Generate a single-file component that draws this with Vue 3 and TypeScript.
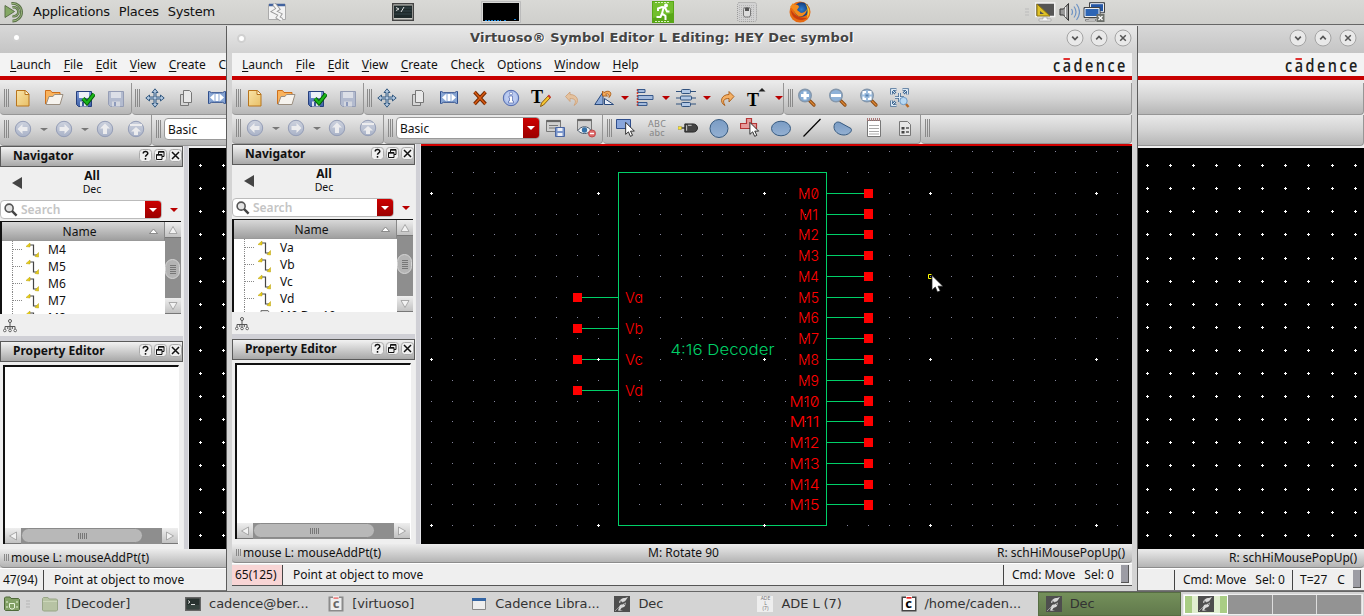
<script setup lang="ts">
interface Tool { icon: string; drop?: boolean; red?: boolean; glyph?: string }
interface Dot { x: number; y: number; major: boolean }
interface EditorWindow {
  id: string
  title: string
  rows: { name: string; cls: string }[]
  clipped: string
  coord: string
  middle: string
  temp: boolean
}

const menus: [string, string, string][] = [
  ['', 'L', 'aunch'], ['', 'F', 'ile'], ['', 'E', 'dit'], ['', 'V', 'iew'], ['', 'C', 'reate'],
  ['Chec', 'k', ''], ['O', 'p', 'tions'], ['', 'W', 'indow'], ['', 'H', 'elp'],
]

const fileTools: Tool[] = [{ icon: 'new' }, { icon: 'open' }, { icon: 'savecheck' }, { icon: 'save' }]
const editTools: Tool[] = [
  { icon: 'move' }, { icon: 'copy' }, { icon: 'stretch' }, { icon: 'delete' }, { icon: 'info' }, { icon: 'tedit', glyph: 'T' },
  { icon: 'undo' }, { icon: 'flip', drop: true, red: true }, { icon: 'align', drop: true, red: true },
  { icon: 'distribute', drop: true, red: true }, { icon: 'redo' }, { icon: 'tup', glyph: 'T', drop: true, red: true },
]
const zoomTools: Tool[] = [{ icon: 'zoomin' }, { icon: 'zoomout' }, { icon: 'zoomfit' }, { icon: 'zoomsel' }]
const navTools: Tool[] = [{ icon: 'back', drop: true }, { icon: 'forward', drop: true }, { icon: 'up' }, { icon: 'top' }]
const shapeTools: Tool[] = [
  { icon: 'rectsel' }, { icon: 'abc', glyph: 'ABC abc' }, { icon: 'pin' }, { icon: 'circle' }, { icon: 'redsel' },
  { icon: 'ellipse' }, { icon: 'line' }, { icon: 'blob' }, { icon: 'notepad' }, { icon: 'doc' },
]

const windows: EditorWindow[] = [
  {
    id: 'back', title: '', rows: ['M4', 'M5', 'M6', 'M7'].map(name => ({ name, cls: 'pin' })),
    clipped: 'M8', coord: '47(94)', middle: '', temp: true,
  },
  {
    id: 'front', title: 'Virtuoso® Symbol Editor L Editing: HEY Dec symbol',
    rows: ['Va', 'Vb', 'Vc', 'Vd'].map(name => ({ name, cls: 'pin' })),
    clipped: 'M0 Dec10', coord: '65(125)', middle: 'M: Rotate 90', temp: false,
  },
]

// Schematic grid, relative to the canvas origin (189, 148)
const backDots: Dot[] = []
for (let i = 0; i < 51; i++) {
  for (let j = 0; j < 17; j++) {
    backDots.push({ x: Math.floor(200.15 + 23.1 * i) - 189, y: Math.floor(165.65 + 23.1 * j) - 148, major: true })
  }
}
// Symbol grid, relative to the canvas origin (421, 146)
const gridX = (k: number) => Math.round(597.65 + 20.775 * k) - 421
const gridY = (k: number) => Math.round(192.85 + 20.77 * k) - 146
const frontDots: Dot[] = []
for (let i = -8; i <= 25; i++) {
  for (let j = -2; j <= 16; j++) {
    frontDots.push({ x: gridX(i), y: gridY(j), major: i % 8 === 0 && j % 8 === 0 })
  }
}
const tall = [1, 6, 10, 11, 15]
const outputs = Array.from({ length: 16 }, (_, i) => ({
  name: 'M' + i, y: gridY(i), top: gridY(i) - (tall.includes(i) && i !== 6 && i !== 15 ? 5 : 4), h: tall.includes(i) ? 10 : 9,
  x: i > 9 ? 368.5 : i === 1 ? 378 : 377, w: i > 9 ? 30 : i === 1 ? 19 : 21,
}))
const inputs = ['Va', 'Vb', 'Vc', 'Vd'].map((name, i) => ({ name, y: 151 + 31 * i }))

const tasks = [
  { icon: 'folder', label: '[Decoder]' }, { icon: 'terminal', label: 'cadence@ber...' },
  { icon: 'cgrey', label: '[virtuoso]', glyph: 'c' }, { icon: 'window', label: 'Cadence Libra...' },
  { icon: 'quill', label: 'Dec' }, { icon: 'ade', label: 'ADE L (7)', glyph: 'ADE\nL\n(7)' },
  { icon: 'cdark', label: '/home/caden...', glyph: 'c' }, { icon: 'quill', label: 'Dec', active: true },
]
</script>

<template>
  <div class="desktop">
    <svg class="sprite" width="0" height="0">
      <defs>
        <linearGradient id="gBlue" x1="0" y1="0" x2="0" y2="1"><stop offset="0" stop-color="#7a9cc4" /><stop offset="1" stop-color="#94b0d2" /></linearGradient>
        <linearGradient id="gSave" x1="0" y1="0" x2="0" y2="1"><stop offset="0" stop-color="#7f9bd8" /><stop offset="1" stop-color="#3f62a8" /></linearGradient>
        <linearGradient id="gPage" x1="0" y1="0" x2="1" y2="1"><stop offset="0" stop-color="#f9e3a6" /><stop offset="1" stop-color="#e8c068" /></linearGradient>
        <linearGradient id="gNav" x1="0" y1="0" x2="0" y2="1"><stop offset="0" stop-color="#cdd2de" /><stop offset="1" stop-color="#aab3c8" /></linearGradient>
        <radialGradient id="gFox"><stop offset="0" stop-color="#2f7fd0" /><stop offset="1" stop-color="#123a7c" /></radialGradient>
      </defs>
      <symbol id="i-new" viewBox="0 0 20 20"><path d="M3.500 2.500h9l3.500 3.500v12H3.500z" fill="url(#gPage)" stroke="#b8741c" /><path d="M12 3v3.500h4" fill="#fff3cf" stroke="#b8741c" /></symbol>
      <symbol id="i-open" viewBox="0 0 20 20"><path d="M1.500 16V2.500h5l1.500 2h8V9" fill="#f9b35d" stroke="#cf6f19" /><path d="M2 16.500L5 8.500h4l1.500-2h8.500l-3 10z" fill="#f6f3ee" stroke="#9a8e80" /></symbol>
      <symbol id="i-savecheck" viewBox="0 0 20 20"><path d="M1.500 3.500h15v15h-13l-2-2z" fill="url(#gSave)" stroke="#263f7c" /><path d="M4 4h10v6H4z" fill="#eef1f8" /><path d="M5 13.500h8v5H5z" fill="#dfe3ec" /><path d="M7 14h2v4H7z" fill="#405a98" /><path d="M8 10.500l4 4.500 7-9" fill="none" stroke="#075b07" stroke-width="4.200" /><path d="M8 10.500l4 4.500 7-9" fill="none" stroke="#19b519" stroke-width="2.300" /></symbol>
      <symbol id="i-save" viewBox="0 0 20 20"><path d="M2.500 3.500h15v15h-13l-2-2z" fill="#b3bbcf" stroke="#959db5" /><path d="M5 4h10v6H5z" fill="#dcdfe7" /><path d="M6 13.500h8v5H6z" fill="#d4d7df" /><path d="M8 14h2v4H8z" fill="#8d9abc" /></symbol>
      <symbol id="i-move" viewBox="0 0 20 20"><path d="M10 .8l3 3.700h-2v4.500h4.500V7l3.700 3-3.700 3v-2H11v4.500h2l-3 3.700-3-3.700h2V11H4.500v2L.8 10l3.700-3v2H9V4.500H7z" fill="#b4c9e0" stroke="#345a80" stroke-width="1" /></symbol>
      <symbol id="i-copy" viewBox="0 0 20 20"><path d="M4.500 6.500h8v11h-8z" fill="#d5d5d5" stroke="#777" /><path d="M7.500 2.500h6l2 2v10h-8z" fill="#e8e8e8" stroke="#777" /></symbol>
      <symbol id="i-stretch" viewBox="0 0 20 20"><path d="M1.500 3.500h1l2 1.200h11l2-1.200h1v12h-1l-2-1.200h-11l-2 1.200h-1z" fill="#88a6d4" stroke="#2f4e8c" /><path d="M3 9.500l4.500-4v8zM17 9.500l-4.500-4v8zM8.500 6h3v7h-3z" fill="#fff" /></symbol>
      <symbol id="i-delete" viewBox="0 0 20 20"><path d="M4.500 4l11 12M15.500 4l-11 12" stroke="#742900" stroke-width="3.600" /><path d="M4.500 4l11 12M15.500 4l-11 12" stroke="#d95a12" stroke-width="1.500" /></symbol>
      <symbol id="i-info" viewBox="0 0 20 20"><circle cx="10" cy="10" r="7.700" fill="#a9bde8" stroke="#5169ae" /><circle cx="10" cy="9.500" r="6" fill="#bccbf0" /><path d="M8 8h3.500v5h1v2H7.500v-2h1V10H8z" fill="#fff" stroke="#5169ae" stroke-width=".7" /><circle cx="10" cy="5.500" r="1.500" fill="#fff" stroke="#5169ae" stroke-width=".7" /></symbol>
      <symbol id="i-tedit" viewBox="0 0 20 20"><path d="M8.500 18.500l1-3.500 7-7.500 2 2-7 7.500z" fill="#f5c531" stroke="#8b5c0c" /><path d="M15.500 8l2.500 2.500 1-1.500-2-2.500z" fill="#cb3431" /></symbol>
      <symbol id="i-undo" viewBox="0 0 20 20"><path d="M7 6.500c8 0 10 8 4 11 3-5 1-7-4-7v3L2.500 8.500 7 4z" fill="#e4c29f" stroke="#cfa37a" stroke-width=".9" /></symbol>
      <symbol id="i-redo" viewBox="0 0 20 20"><path d="M12 6.500c-8 0-10 8-4 11-3-5-1-7 4-7v3.500l5-5.500-5-5z" fill="#f4b065" stroke="#a95b15" stroke-width=".9" /></symbol>
      <symbol id="i-flip" viewBox="0 0 20 20"><path d="M.8 16.500L9 4v12.500z" fill="#8eabd8" stroke="#28497d" /><path d="M10.500 16.500h9l-9-6z" fill="#e9eef7" stroke="#28497d" /><path d="M8.500 3v5h5l-1.800-1.700c2-1.300 4 .2 3.300 3.200 4-4 1-8.500-5-5z" fill="#f5ab5c" stroke="#a95b15" stroke-width=".9" /></symbol>
      <symbol id="i-align" viewBox="0 0 20 20"><path d="M2.500 1v18" stroke="#e3361d" stroke-width="1.500" stroke-dasharray="2 1" /><path d="M3 1.500h7v3H3zM3 7.500h15v4H3zM3 14.500h9v3H3z" fill="#a5bbdc" stroke="#37588b" /></symbol>
      <symbol id="i-distribute" viewBox="0 0 20 20"><path d="M0 3.500h20M0 10h20M0 16h20" stroke="#31527e" /><rect x="5.500" y="1.500" width="9" height="4" rx="1" fill="#b2c8e5" stroke="#31527e" /><rect x="4.500" y="8" width="11" height="4" rx="1" fill="#b2c8e5" stroke="#31527e" /><rect x="5.500" y="14.500" width="9" height="4" rx="1" fill="#b2c8e5" stroke="#31527e" /></symbol>
      <symbol id="i-tup" viewBox="0 0 20 20"><path d="M14 0l3.500 3.500h-7z" fill="#222" /></symbol>
      <symbol id="i-abc" viewBox="0 0 20 20" />
      <symbol id="i-zoomin" viewBox="0 0 20 20"><path d="M12.500 12.500l4.500 4.500" stroke="#8b4810" stroke-width="3.200" stroke-linecap="round" /><path d="M13 13l4.500 4.500" stroke="#dd8936" stroke-width="1.300" /><circle cx="8" cy="7.500" r="6.300" fill="#86acd4" stroke="#8497ac" stroke-width="1.400" /><path d="M8 3.500v8M4 7.500h8" stroke="#fff" stroke-width="3" /></symbol>
      <symbol id="i-zoomout" viewBox="0 0 20 20"><path d="M12.500 12.500l4.500 4.500" stroke="#8b4810" stroke-width="3.200" stroke-linecap="round" /><path d="M13 13l4.500 4.500" stroke="#dd8936" stroke-width="1.300" /><circle cx="8" cy="7.500" r="6.300" fill="#8fb2d8" stroke="#8497ac" stroke-width="1.400" /><path d="M3 7.500h10" stroke="#fff" stroke-width="3" /></symbol>
      <symbol id="i-zoomfit" viewBox="0 0 20 20"><path d="M12.500 12.500l4.500 4.500" stroke="#8b4810" stroke-width="3.200" stroke-linecap="round" /><path d="M13 13l4.500 4.500" stroke="#dd8936" stroke-width="1.300" /><circle cx="8" cy="7.500" r="6.300" fill="#9bbcde" stroke="#8497ac" stroke-width="1.400" /><path d="M4.500 6.500V4H7M9 4h2.500v2.500M11.500 8.500V11H9M7 11H4.500V8.500" fill="none" stroke="#fff" stroke-width="2" /><path d="M6.500 7.500h3" stroke="#5682b3" stroke-width="2" /></symbol>
      <symbol id="i-zoomsel" viewBox="0 0 20 20"><path d="M1.500 6.500v-5h5M12.500 1.500h5v5M1.500 12.500v5h5M1.500 1.500l4 4M17.500 1.500l-4 4M1.500 17.500l4-4M9.500 5v9M5 9.500h9" fill="none" stroke="#456d97" stroke-width="2.600" /><path d="M1.500 6.500v-5h5M12.500 1.500h5v5M1.500 12.500v5h5M1.500 1.500l4 4M17.500 1.500l-4 4M1.500 17.500l4-4M9.500 5v9M5 9.500h9" fill="none" stroke="#dbe8f4" stroke-width="1" /><path d="M15.500 15.500l3 3.500" stroke="#b86822" stroke-width="2.300" /><circle cx="13.500" cy="13" r="3.700" fill="#b8d8f2" stroke="#6f9bc7" /></symbol>
      <symbol id="i-disc" viewBox="0 0 20 20"><circle cx="10" cy="10" r="7.700" fill="url(#gNav)" stroke="#949db6" /></symbol>
      <symbol id="i-back" viewBox="0 0 20 20"><use href="#i-disc" /><path d="M4.500 10l5-5v3h5v4h-5v3z" fill="#ececee" /></symbol>
      <symbol id="i-forward" viewBox="0 0 20 20"><use href="#i-disc" /><path d="M15.500 10l-5-5v3h-5v4h5v3z" fill="#ececee" /></symbol>
      <symbol id="i-up" viewBox="0 0 20 20"><use href="#i-disc" /><path d="M10 4.500l5 5h-3v5.500H8V9.500H5z" fill="#ececee" /></symbol>
      <symbol id="i-top" viewBox="0 0 20 20"><use href="#i-disc" /><path d="M4 5h12v2H4zM10 8l5 4.500h-3V16H8v-3.500H5z" fill="#ececee" /></symbol>
      <symbol id="i-cursor" viewBox="0 0 12 18"><path d="M1 1v13l3-2.700 2.200 4.900 2.300-1.100-2.200-4.600h4.200z" fill="#fff" stroke="#222" /></symbol>
      <symbol id="i-rectsel" viewBox="0 0 20 20"><path d="M.5 1.500h14v9H.5z" fill="#89a6dc" stroke="#2f4e8c" /><use href="#i-cursor" x="8.500" y="3.500" width="11.500" height="16.500" /></symbol>
      <symbol id="i-pin" viewBox="0 0 22 20"><path d="M1 10h9" stroke="#222" stroke-width="1.300" /><path d="M0 8.500h4v3H0z" fill="#ffe83b" stroke="#857a2a" stroke-width=".5" /><path d="M7.500 5.500h9c3 0 5 2 5 4.500s-2 4.500-5 4.500h-9z" fill="#444" stroke="#222" /><path d="M9.500 7v6M11 7h4" stroke="#ddd" stroke-width="1" /></symbol>
      <symbol id="i-circle" viewBox="0 0 20 20"><circle cx="10" cy="10.500" r="9" fill="url(#gBlue)" stroke="#365a80" /></symbol>
      <symbol id="i-redsel" viewBox="0 0 20 20"><path d="M6.500 .5h5v5h5v5h-16v-5h6z" fill="#e79b9b" stroke="#b43535" stroke-width="1.200" /><use href="#i-cursor" x="9" y="3.500" width="11" height="16.500" /></symbol>
      <symbol id="i-ellipse" viewBox="0 0 20 20"><ellipse cx="10" cy="10.500" rx="9.500" ry="7.300" fill="url(#gBlue)" stroke="#365a80" /></symbol>
      <symbol id="i-line" viewBox="0 0 20 20"><path d="M1.500 18.500L18.500 1" stroke="#000" stroke-width="1.200" /></symbol>
      <symbol id="i-blob" viewBox="0 0 20 20"><path d="M1 9c0-5 4-6 7-4l10 5.500c2 3-3 6.500-7 6.500-6 0-10-4-10-8z" fill="url(#gBlue)" stroke="#365a80" /></symbol>
      <symbol id="i-notepad" viewBox="0 0 20 20"><path d="M3.500 2.500h13v16h-13z" fill="#fff" stroke="#777" /><path d="M3 1.500h14" stroke="#a77" stroke-width="3" stroke-dasharray="1 1" /><path d="M5 7.500h10M5 10.500h10M5 13.500h10M5 16h10" stroke="#aaa" /></symbol>
      <symbol id="i-doc" viewBox="0 0 20 20"><path d="M4.500 3.500h8l3 3v11h-11z" fill="#e7e7e7" stroke="#777" /><path d="M6.500 9h3v2.500h-3zM6.500 13h3v2.500h-3z" fill="#444" /><path d="M11 10h3M11 14h3" stroke="#555" stroke-width="1.500" /></symbol>
      <symbol id="i-wsave" viewBox="0 0 20 20"><path d="M1.500 2.500h14v11h-14z" fill="#d0d0d0" stroke="#777" /><path d="M1.500 3h14" stroke="#666" stroke-width="2.200" /><path d="M4 7.500h9M4 10h6" stroke="#777" /><path d="M10.500 9.500h9v9h-9z" fill="#7c97cc" stroke="#4a66a3" /><path d="M12.500 10h5v3h-5zM12.500 15h5v3h-5z" fill="#eceff6" /></symbol>
      <symbol id="i-wview" viewBox="0 0 20 20"><path d="M1.500 1.500h14v11h-14z" fill="#d0d0d0" stroke="#777" /><path d="M1.500 2h14" stroke="#666" stroke-width="2.200" /><path d="M2 12.500c3-5 10-5 13 0-3 4-10 4-13 0z" fill="#f6f6f6" stroke="#45566b" /><circle cx="8.500" cy="12" r="2.700" fill="#3571a8" /><circle cx="16" cy="15.500" r="3.500" fill="#dd6a6c" stroke="#c24848" /><path d="M14 15.500h4" stroke="#fff" stroke-width="1.400" /></symbol>
      <symbol id="i-folder" viewBox="0 0 16 16"><path d="M.5 14V2.500l1-1H6l1 1.500h7.500l1 1V14l-1 1h-13z" fill="#b7c3a3" stroke="#98a586" /><path d="M1 5.500h14" stroke="#cbd6b8" /></symbol>
      <symbol id="i-home" viewBox="0 0 16 16"><path d="M.5 13.500V2l1-1H6l1 1.500h7.500l1 1v10l-1 1h-13z" fill="#82a065" stroke="#4f693a" /><path d="M5.500 7.500h5v4.500L9 13H7l-1.500-1.500zM3 5v2M13 5v2M3 10v2M13 10v2" fill="none" stroke="#e8f4dc" /></symbol>
      <symbol id="i-terminal" viewBox="0 0 16 16"><path d="M.7 1.700h14.600v12.600H.7z" fill="#28322f" stroke="#666" stroke-width="1.400" /><path d="M3 4.500l2 1.500-2 1.500M6 8.500h4" stroke="#ddd" fill="none" /><path d="M2 10h12M2 12h12" stroke="#45544e" /></symbol>
      <symbol id="i-cgrey" viewBox="0 0 16 16"><path d="M.5 .5h15v15H.5z" fill="#8b8b8b" /><path d="M2.500 2h11v12h-11z" fill="#eee" /><path d="M5 0h6v3H5z" fill="#eee" /><path d="M5.500 1.500h5v1.200h-5z" fill="#e55" /></symbol>
      <symbol id="i-cdark" viewBox="0 0 16 16"><path d="M.5 .5h15v15H.5z" fill="#444" /><path d="M2 2h12v12H2z" fill="#fff" /><path d="M5 0h6v3H5z" fill="#fff" /><path d="M5.500 1h5v1.700h-5z" fill="#e22" /></symbol>
      <symbol id="i-window" viewBox="0 0 16 16"><path d="M1.500 2.500h13v11h-13z" fill="#eee" stroke="#888" /><path d="M1 3.500h14" stroke="#3465a4" stroke-width="3" /></symbol>
      <symbol id="i-quill" viewBox="0 0 16 16"><path d="M0 0h16v16H0z" fill="#4e4e4e" /><path d="M1 15l6-6" stroke="#999" /><path d="M5 7c0-3 3-5 6-5l3-1-2 3c-2 3-4 1-7 3zM6 9c2-1 4 0 6-3l-1 4c-1 2-4 1-4 3l-1 1 3 1-5-.5z" fill="#d9d9d9" /><path d="M6 5c2 0 3 2 5 4" stroke="#777" fill="none" /></symbol>
      <symbol id="i-ade" viewBox="0 0 16 16"><path d="M0 0h16v16H0z" fill="#eee" /></symbol>
      <symbol id="i-net" viewBox="0 0 16 16"><path d="M4 3h4.500v10h4" fill="none" stroke="#444" stroke-width="1.200" /><path d="M1 4.500L5 1v4zM10 14.500l3.500-4v4.500z" fill="#e9cf16" stroke="#b79d0b" stroke-width=".5" /></symbol>
      <symbol id="i-search" viewBox="0 0 15 15"><circle cx="5.500" cy="5.500" r="4.300" fill="#e4e4e4" stroke="#555" stroke-width="1.700" /><path d="M8.500 8.500l5 5" stroke="#444" stroke-width="2.600" /></symbol>
      <symbol id="i-tree" viewBox="0 0 14 14"><path d="M7 3v7M2 10V7.500h10V10M4.800 10V7.500M9.300 10V7.500" fill="none" stroke="#555" /><circle cx="7" cy="2" r="1.500" fill="#fff" stroke="#555" /><g fill="#fff" stroke="#555" stroke-width=".9"><circle cx="1.800" cy="11.500" r="1.300" /><circle cx="7" cy="11.500" r="1.300" /><circle cx="12.200" cy="11.500" r="1.300" /></g></symbol>
    </svg>

    <header class="panel">
      <svg class="mate" viewBox="0 0 22 22"><path d="M7 2.500a8.800 8.800 0 1 1 1 17.500" fill="none" stroke="#5b7148" stroke-width="2.800" /><path d="M7 2.500a8.800 8.800 0 1 1 1 17.500" fill="none" stroke="#9ab77e" stroke-width="1" /><path d="M8 6.500a4.500 4.500 0 1 1 0 8.500" fill="none" stroke="#5b7148" stroke-width="2.600" /><path d="M8 6.500a4.500 4.500 0 1 1 0 8.500" fill="none" stroke="#9ab77e" stroke-width=".9" /><path d="M.5 4.500L10 10.500.5 16.500z" fill="#84a864" stroke="#5b7148" /></svg>
      <nav class="panel-menu"><span>Applications</span><span>Places</span><span>System</span></nav>
      <svg class="launch xterm" viewBox="0 0 18 18"><path d="M.5 1.500h17v15H.5z" fill="#f3f3f3" stroke="#aaa" /><path d="M1 2h16" stroke="#42639e" stroke-width="2.500" /><path d="M6 1l4 5-4 2.500 6 3-2 3 4 2.500" stroke="#999" stroke-width="4" fill="none" /><path d="M6 1l4 5-4 2.500 6 3-2 3 4 2.500" stroke="#f5f5f5" stroke-width="2.200" fill="none" /></svg>
      <svg class="launch term" viewBox="0 0 22 18"><rect x=".7" y=".7" width="20.600" height="16.600" fill="#c9c9c4" stroke="#444" stroke-width="1.400" /><path d="M2 2.500h18v12.500H2z" fill="#1f2a2b" /><path d="M2.500 5h17M2.500 8h17M2.500 11h17" stroke="#35454a" /><path d="M4 4.500l3 1.500-3 1.500M9 9l3-5" stroke="#ddd" fill="none" /></svg>
      <svg class="launch blackbox" viewBox="0 0 40 22"><path d="M.5 .5h39v21H.5z" fill="#d8d8d6" stroke="#bbb" /><path d="M2 2h36v18H2z" fill="#000" /><path d="M4 19.500h16M23 19.500h3M33 18.500h3" stroke="#1687e0" stroke-dasharray="2 1" /></svg>
      <svg class="launch exit" viewBox="0 0 22 22"><path d="M0 0h22v22H0z" fill="#59a718" /><path d="M1 1h20v11L1 17z" fill="#73bf2e" /><path d="M3 1.500h14M3 20.500h14" stroke="#d9f3c0" stroke-dasharray="2 1" /><circle cx="14" cy="4.500" r="2" fill="#fff" /><path d="M6 10V7.500l4-1.500 3 .5 2 4h2.500M11.500 7l-1.500 5.500 3.500 2.500v4M10 12.500L8.500 16H4.500" stroke="#fff" stroke-width="2" fill="none" /></svg>
      <svg class="launch mouse" viewBox="0 0 20 20"><rect x=".5" y=".5" width="19" height="19" rx="2" fill="#d2d2d2" stroke="#999" stroke-dasharray="1 1" /><path d="M2 3.500h16M2 5.500h16M2 7.500h16M2 9.500h16M2 11.500h16M2 13.500h16M2 15.500h16M2 17.500h16" stroke="#b4b4b4" stroke-dasharray="1 1" /><rect x="6.500" y="5.500" width="7" height="9.500" rx="2" fill="#ddd" stroke="#777" /><path d="M8 6h4v3H8z" fill="#555" /></svg>
      <svg class="launch fox" viewBox="0 0 22 22"><circle cx="11" cy="11" r="10.500" fill="#e66a12" /><circle cx="12.500" cy="8.500" r="7.300" fill="url(#gFox)" /><path d="M1 6l3-4 1 2c2-1 5 0 5 2L8 9l4 3c2 0 4-1 6-4-1 7-7 9-10 6-3-3-3-6-7-8z" fill="#f48b1c" /><path d="M16 2c5 4 6 11 2 15 1-6 1-10-2-15z" fill="#f9c32c" /><path d="M2 9c0 8 9 13 16 8-5 0-12-1-16-8z" fill="#c83d0d" /></svg>
      <div class="tray">
        <svg class="traygrip" viewBox="0 0 4 8"><path d="M0 1h4M0 4h4M0 7h4" stroke="#bbb" /></svg>
        <svg class="t1" viewBox="0 0 20 20"><path d="M.7 1h19v13.500H.7z" fill="#555" stroke="#f2f2f2" stroke-width="1.400" /><path d="M2 2v12h13z" fill="#e0c227" stroke="#8d7410" /><path d="M5 9v3h4z" fill="#555" /><path d="M8 15h4v2h4v2H4v-2h4z" fill="#f4f4f4" stroke="#999" stroke-width=".6" /></svg>
        <svg class="t2" viewBox="0 0 20 20"><path d="M.5 7v6h3.500l5 5.500V1.500L4 7z" fill="#999" stroke="#333" /><path d="M6 5v10" stroke="#eee" /><path d="M12 7q2 3 0 6M14.500 4.500q4 5.500 0 11M17 2q6 8 0 16" stroke="#6e93c4" fill="none" stroke-width="1.200" /></svg>
        <svg class="t3" viewBox="0 0 22 20"><path d="M6 .7h15v10H6z" fill="#2456a5" stroke="#444" stroke-width="1" /><path d="M7 1.700h13v8H7z" fill="none" stroke="#eee" /><path d="M.5 5.500h16v10H.5z" fill="#2d65b5" stroke="#444" /><path d="M1.500 6.500h14v8h-14z" fill="none" stroke="#eee" /><path d="M5 17h7v2H2v-1.500h3z" fill="#eee" stroke="#666" stroke-width=".7" /><path d="M13 12h8v8h-8z" fill="#6d706b" /><path d="M15 14l4 4M19 14l-4 4" stroke="#fff" stroke-width="1.300" /></svg>
      </div>
    </header>

    <main class="workspace">
      <section v-for="win in windows" :key="win.id" class="window" :class="win.id">
        <div class="titlebar">
          <i class="dot"></i>
          <span class="title">{{ win.title }}</span>
          <div class="winbuttons">
            <svg viewBox="0 0 18 18"><circle cx="9" cy="9" r="8" fill="#e9e9e9" stroke="#a4a4a4" /><path d="M6.200 7.700l2.800 2.800 2.800-2.800" fill="none" stroke="#555" stroke-width="1.700" /></svg>
            <svg viewBox="0 0 18 18"><circle cx="9" cy="9" r="8" fill="#e9e9e9" stroke="#a4a4a4" /><path d="M6.200 10.300L9 7.500l2.800 2.800" fill="none" stroke="#555" stroke-width="1.700" /></svg>
            <svg viewBox="0 0 18 18"><circle cx="9" cy="9" r="8" fill="#e9e9e9" stroke="#a4a4a4" /><path d="M6.200 6.200l5.600 5.600M11.800 6.200l-5.600 5.600" fill="none" stroke="#555" stroke-width="1.500" /></svg>
          </div>
        </div>
        <div class="frame">
          <div class="menubar">
            <span v-for="m in menus" :key="m.join('')" class="menu">{{ m[0] }}<u>{{ m[1] }}</u>{{ m[2] }}</span>
            <span class="logo">c<b>a</b>dence</span>
          </div>
          <div class="toolrow row1">
            <div v-for="(g, gi) in [fileTools, editTools, zoomTools]" :key="gi" class="group" :class="'a' + gi">
              <i class="grip"></i>
              <template v-for="t in g" :key="t.icon">
                <span class="tool"><b v-if="t.glyph" class="glyph" :class="t.icon">{{ t.glyph }}</b><svg><use :href="'#i-' + t.icon" /></svg></span>
                <span v-if="t.drop" class="drop red"></span>
              </template>
            </div>
          </div>
          <div class="toolrow row2">
            <div class="group b0">
              <i class="grip"></i>
              <template v-for="t in navTools" :key="t.icon">
                <span class="tool"><svg><use :href="'#i-' + t.icon" /></svg></span>
                <span v-if="t.drop" class="drop"></span>
              </template>
            </div>
            <div class="group b1">
              <i class="grip"></i>
              <div class="combo"><span>Basic</span><i></i></div>
              <span class="tool"><svg><use href="#i-wsave" /></svg></span>
              <span class="tool"><svg><use href="#i-wview" /></svg></span>
            </div>
            <div class="group b2">
              <i class="grip"></i>
              <span v-for="t in shapeTools" :key="t.icon" class="tool wide"><b v-if="t.glyph" class="glyph" :class="t.icon">{{ t.glyph }}</b><svg><use :href="'#i-' + t.icon" /></svg></span>
            </div>
            <div class="group b3"><i class="grip"></i></div>
          </div>

          <div class="body">
            <aside class="side">
              <div class="dockhead"><b>Navigator</b>
                <svg v-for="k in 3" :key="k" viewBox="0 0 13 13"><rect x=".5" y=".5" width="12" height="12" rx="3" fill="#f0f0f0" stroke="#aaa" />
                  <path v-if="k === 1" d="M4.200 4.500c0-3 4.800-2.500 4.600 0-.1 1.500-2.300 1.300-2.300 3.300M6.500 9v1.800" fill="none" stroke="#111" stroke-width="1.500" />
                  <path v-if="k === 2" d="M4.500 5V2.500h5.500v5H8M2.500 5.500H8v5H2.500zM4.500 3.200H10M2.500 6.200H8" fill="none" stroke="#111" />
                  <path v-if="k === 3" d="M3 3l7 7M10 3l-7 7" fill="none" stroke="#111" stroke-width="1.500" /></svg>
              </div>
              <div class="scope"><i class="leftarrow"></i><div><b>All</b><span>Dec</span></div></div>
              <div class="searchrow">
                <div class="search"><svg><use href="#i-search" /></svg><span>Search</span><i></i></div>
                <em></em>
              </div>
              <div class="tree">
                <div class="treemain">
                  <div class="treehead">Name<svg viewBox="0 0 9 6"><path d="M.5 5.500l4-4.500 4 4.500z" fill="#fff" stroke="#777" stroke-width=".8" /></svg></div>
                  <div class="treelist">
                    <div v-for="r in win.rows" :key="r.name" class="leaf"><i></i><svg><use href="#i-net" /></svg><span>{{ r.name }}</span></div>
                    <div class="leaf"><i class="none"></i><svg v-if="win.id === 'back'"><use href="#i-net" /></svg><svg v-else viewBox="0 0 16 16"><path d="M4 2.500h7l2 3H4z" fill="#ddd" stroke="#777" /></svg><span>{{ win.clipped }}</span></div>
                  </div>
                </div>
                <div class="vscroll"><i class="btn"><svg viewBox="0 0 10 9"><path d="M1 8l4-7 4 7z" fill="#f2f2f2" stroke="#999" stroke-width=".8" /></svg></i><div class="vtrack"><i class="vthumb"></i></div><i class="btn"><svg viewBox="0 0 10 9"><path d="M1 1l4 7 4-7z" fill="#f2f2f2" stroke="#999" stroke-width=".8" /></svg></i></div>
              </div>
              <div class="hier"><svg><use href="#i-tree" /></svg></div>
              <div class="split"></div>
              <div class="dockhead"><b>Property Editor</b>
                <svg v-for="k in 3" :key="k" viewBox="0 0 13 13"><rect x=".5" y=".5" width="12" height="12" rx="3" fill="#f0f0f0" stroke="#aaa" />
                  <path v-if="k === 1" d="M4.200 4.500c0-3 4.800-2.500 4.600 0-.1 1.500-2.300 1.300-2.300 3.300M6.500 9v1.800" fill="none" stroke="#111" stroke-width="1.500" />
                  <path v-if="k === 2" d="M4.500 5V2.500h5.500v5H8M2.500 5.500H8v5H2.500zM4.500 3.200H10M2.500 6.200H8" fill="none" stroke="#111" />
                  <path v-if="k === 3" d="M3 3l7 7M10 3l-7 7" fill="none" stroke="#111" stroke-width="1.500" /></svg>
              </div>
              <div class="props">
                <div class="propspace"></div>
                <div class="hscroll"><i class="btn"><svg viewBox="0 0 9 10"><path d="M8 1L1 5l7 4z" fill="#f2f2f2" stroke="#999" stroke-width=".8" /></svg></i><div class="htrack"><i class="hthumb"></i></div><i class="btn"><svg viewBox="0 0 9 10"><path d="M1 1l7 4-7 4z" fill="#f2f2f2" stroke="#999" stroke-width=".8" /></svg></i></div>
              </div>
            </aside>
            <div class="gutter"></div>

            <svg v-if="win.id === 'back'" class="canvas" width="1175" height="401" shape-rendering="crispEdges">
              <path v-for="(d, i) in backDots" :key="i" :d="`M${d.x - 1} ${d.y + 0.5}h3M${d.x + 0.5} ${d.y - 1}v3`" stroke="#fff" />
            </svg>
            <svg v-else class="canvas" width="711" height="398" viewBox="0 0 711 398">
              <g shape-rendering="crispEdges">
                <template v-for="(d, i) in frontDots" :key="i">
                  <rect v-if="!d.major" :x="d.x" :y="d.y" width="1" height="1" fill="#85859c" />
                </template>
                <path v-for="p in inputs" :key="p.name" :d="`M161 ${p.y + 0.5}H197`" stroke="#00d068" />
                <path v-for="p in outputs" :key="p.name" :d="`M406 ${p.y + 0.5}H443`" stroke="#00d068" />
                <rect x="197.500" y="26.500" width="208" height="353" fill="none" stroke="#00d068" />
                <template v-for="(d, i) in frontDots" :key="i">
                  <path v-if="d.major" :d="`M${d.x - 1} ${d.y + 0.5}h3M${d.x + 0.5} ${d.y - 1}v3`" stroke="#fff" />
                </template>
                <rect v-for="p in inputs" :key="p.name" x="152" :y="p.y - 4" width="9" height="9" fill="#f00" />
                <rect v-for="p in outputs" :key="p.name" x="443" :y="p.top" width="9" :height="p.h" fill="#f00" />
              </g>
              <g class="labels">
                <text v-for="p in outputs" :key="p.name" :x="p.x" :y="p.y + 6" :textLength="p.w" lengthAdjust="spacingAndGlyphs">{{ p.name }}</text>
                <text v-for="p in inputs" :key="p.name" x="204" :y="p.y + 6" textLength="18" lengthAdjust="spacingAndGlyphs">{{ p.name }}</text>
                <text class="green" x="249.500" y="209" textLength="104" lengthAdjust="spacingAndGlyphs">4:16 Decoder</text>
              </g>
              <path d="M507.500 128.500h3M507.500 128.500v4h3" stroke="#ff0" fill="none" />
              <path d="M511 129.500v14.500l3.300-3 2.200 5 2.700-1.200-2.200-4.600h4.800z" fill="#fff" stroke="#222" stroke-width=".7" />
            </svg>
          </div>

          <div class="mousebar"><i class="minigrip"></i><span>mouse L: mouseAddPt(t)</span><span class="mid">{{ win.middle }}</span><span class="right">R: schHiMousePopUp()</span></div>
          <div class="statusbar">
            <span class="coord">{{ win.coord }}</span>
            <span class="prompt">Point at object to move</span>
            <span class="cmd">Cmd: Move<span>Sel: 0</span></span>
            <span v-if="win.temp" class="temp">T=27<span>C</span></span>
            <i class="block"></i>
          </div>
        </div>
      </section>
    </main>

    <footer class="taskbar">
      <svg class="homeicon"><use href="#i-home" /></svg>
      <svg class="taskgrip" viewBox="0 0 4 8"><path d="M0 1h4M0 4h4M0 7h4" stroke="#b5b5b5" /></svg>
      <div v-for="(t, i) in tasks" :key="i" class="task" :class="{ active: t.active }"><div class="ticon"><svg><use :href="'#i-' + t.icon" /></svg><b v-if="t.glyph" :class="t.icon">{{ t.glyph }}</b></div><span>{{ t.label }}</span></div>
      <div class="pager"><div class="cell on"><i></i><svg><use href="#i-quill" /></svg><i></i></div><div class="cell"></div><div class="cell"></div><div class="cell"></div></div>
    </footer>
  </div>
</template>

<style>
html, body { margin: 0; overflow: hidden; background: #000; }
</style>

<style scoped>
.desktop { width: 1364px; height: 616px; overflow: hidden; display: flex; flex-direction: column; position: relative; font: 12px/15px "Noto Sans", sans-serif; color: #111; background: #d4d4d4; }
.desktop * { box-sizing: border-box; }
.sprite { position: absolute; }
svg { display: block; flex: none; }

.panel { height: 25px; flex: none; display: flex; align-items: center; background: linear-gradient(#d9d9d6, #cfcfcc); border-bottom: 1px solid #666; padding-left: 4px; font-family: "DejaVu Sans", sans-serif; font-size: 13px; }
.mate { width: 23px; height: 22px; margin-right: 6px; }
.panel-menu { display: flex; gap: 9px; width: 235px; white-space: nowrap; letter-spacing: -.22px; margin-top: -2px; }
.xterm { width: 18px; height: 18px; }
.term { width: 22px; height: 18px; margin-left: 106px; }
.blackbox { width: 40px; height: 22px; margin-left: 67px; }
.exit { width: 22px; height: 22px; margin-left: 131px; }
.mouse { width: 20px; height: 20px; margin-left: 63px; }
.fox { width: 22px; height: 22px; margin-left: 32px; }
.tray { display: flex; margin-left: 214px; align-items: center; }
.traygrip { width: 4px; height: 8px; margin-right: 5px; }
.t1 { width: 22px; height: 20px; margin-right: 3px; }
.t2 { width: 21px; height: 20px; margin-right: 3px; }
.t3 { width: 23px; height: 20px; }

.workspace { height: 566px; flex: none; position: relative; }
.window { position: absolute; display: flex; flex-direction: column; background: #d4d4d4; }
.back { left: 0; top: 0; width: 1364px; height: 566px; }
.front { left: 226px; top: 1px; width: 912px; height: 565px; border-left: 1px solid #5c5c5c; border-right: 1px solid #5c5c5c; }
.titlebar { height: 28px; flex: none; display: grid; grid-template-columns: 80px 1fr 80px; align-items: center; background: linear-gradient(#d8d8d8, #c5c5c5); padding: 0 7px 3px 12px; }
.front .titlebar { height: 27px; background: linear-gradient(#e8e8e8, #d2d2d2); padding: 0 5.5px 3px 10px; }
.dot { width: 9px; height: 9px; border-radius: 50%; background: #fff; border: 2px solid #d0d0d0; }
.title { text-align: center; font: bold 13px/16px "DejaVu Sans", sans-serif; letter-spacing: .09px; padding-right: 45px; color: #444; text-shadow: 1px 1px #fff; white-space: nowrap; }
.winbuttons { display: flex; justify-content: flex-end; gap: 7px; }
.front .winbuttons { gap: 6px; }
.winbuttons svg { width: 18px; height: 18px; }
.frame { display: flex; flex-direction: column; flex: 1; min-height: 0; }
.front .frame { margin: 0 5px 5px; border-bottom: 1px solid #555; }
.menubar { height: 27px; flex: none; background: #f3f3f3; border-bottom: 4px solid #c80000; display: flex; align-items: center; padding: 0 7px 0 10px; gap: 12.7px; white-space: nowrap; }
.menu u { text-underline-offset: 2px; text-decoration-thickness: 1px; }
.logo { margin-left: auto; font: 600 18px/20px "Open Sans", sans-serif; letter-spacing: 3.1px; margin-right: -3px; transform: scaleX(.8); transform-origin: calc(100% - 3px); color: #222; }
.logo b { font-weight: inherit; background: linear-gradient(#e03030, #e03030) 1px 5px / 8px 2px no-repeat; }
.toolrow { display: flex; flex: none; background: #eaeaea; }
.row1 { height: 35px; padding-top: 3px; }
.row2 { height: 31px; }
.front .row2 { height: 29px; }
.group { display: flex; align-items: center; background: linear-gradient(#e9e9e9, #d3d3d3 50%, #b6b6b6); border: solid #969696; border-width: 0 1px 1px 0; border-radius: 0 0 4px 4px; flex: none; padding-bottom: 2px; }
.a0 { width: 132px; }
.a1 { width: 420px; }
.a2 { flex: 1; }
.b0 { width: 152px; }
.b1 { width: 219px; }
.b2 { width: 318px; }
.b3 { flex: 1; }
.grip { width: 7px; height: 18px; flex: none; position: relative; }
.grip::before { content: ""; position: absolute; left: 4px; width: 5px; height: 18px; background: repeating-linear-gradient(90deg, #8a8a8a 0 1px, transparent 1px 2px); }
.a1 .grip::before { left: 3px; }
.tool { width: 31px; flex: none; display: flex; justify-content: center; position: relative; }
.wide { width: 31.1px; }
.tool svg { width: 20px; height: 20px; position: relative; }
.glyph { position: absolute; left: 5px; font: bold 18px/18px "Liberation Serif", serif; color: #000; }
.glyph.tedit { top: 0; }
.glyph.tup { top: 3px; }
.glyph.abc { top: 1px; width: 22px; font: 9px/9px "Noto Sans", sans-serif; letter-spacing: .3px; color: #858585; text-align: center; }
.drop { width: 10px; flex: none; display: flex; }
.drop::before { content: ""; margin-left: 2px; border: 4px solid transparent; border-bottom: 0; border-top: 3px solid #777; }
.drop.red::before { border-top: 4px solid #b90000; }
.combo { margin: 0 0 0 5px; width: 144px; height: 22px; background: #fff; border: 1px solid #999; border-radius: 4px; display: flex; align-items: center; padding-left: 3px; flex: none; overflow: hidden; }
.combo i { margin-left: auto; width: 16px; height: 22px; background: linear-gradient(#cf0000, #980000); display: flex; align-items: center; justify-content: center; }
.combo i::before, .search i::before { content: ""; border: 4px solid transparent; border-bottom: 0; border-top-color: #fff; }
.b1 .tool { position: relative; left: -.5px; }

.body { display: flex; flex: 1; min-height: 0; background: #efefef; }
.side { width: 183px; flex: none; display: flex; flex-direction: column; background: #efefef; }
.dockhead { height: 21px; flex: none; display: flex; align-items: center; border: 1px solid #5a5a5a; background: linear-gradient(#f2f2f2, #a8a8a8); padding: 0 0 2px 12px; gap: 2px; font-size: 12px; }
.dockhead b { flex: 1; letter-spacing: .02px; }
.dockhead svg { width: 13px; height: 13px; }
.scope { height: 33px; flex: none; display: flex; align-items: center; padding-left: 12px; }
.leftarrow { border: 6px solid transparent; border-left: 0; border-right: 10px solid #444; margin-top: -2px; }
.scope div { flex: 1; margin-right: 21px; display: flex; flex-direction: column; text-align: center; line-height: 14px; font-size: 12px; padding-bottom: 3px; }
.scope span { font-size: 10.5px; line-height: 13px; }
.searchrow { display: flex; align-items: center; height: 21px; flex: none; padding-bottom: 2px; }
.search { width: 162px; height: 19px; border: 1px solid #bbb; border-radius: 4px; background: #fff; display: flex; align-items: center; overflow: hidden; padding-left: 3px; color: #c4c4c4; }
.search svg { width: 14px; height: 14px; }
.search span { margin-left: 3px; font-weight: 600; }
.search i { margin-left: auto; width: 16px; height: 19px; background: linear-gradient(#cf0000, #980000); display: flex; align-items: center; justify-content: center; }
.searchrow em { margin-left: 8px; border: 4px solid transparent; border-bottom: 0; border-top-color: #b90000; }
.tree { height: 93px; flex: none; margin: 0 2px 0 0; border: solid #111; border-width: 1px 0 0 2px; display: flex; background: #fff; overflow: hidden; }
.treemain { flex: 1; display: flex; flex-direction: column; min-width: 0; }
.treehead { height: 19px; flex: none; background: linear-gradient(#d8d8d8, #9f9f9f); text-align: center; line-height: 19px; display: flex; justify-content: center; border-right: 1px solid #888; border-bottom: 1px solid #999; padding-left: 55px; }
.treehead svg { width: 9px; height: 6px; margin: 6px 0 0 53px; }
.treelist { flex: 1; overflow: hidden; }
.leaf { height: 17px; display: flex; align-items: center; padding-left: 10px; }
.leaf i { width: 10px; height: 17px; border-left: 1px dotted #888; display: flex; align-items: center; }
.leaf i::before { content: ""; width: 10px; border-top: 1px dotted #888; }
.leaf i.none::before { border: 0; }
.leaf svg { width: 16px; height: 16px; margin: 0 7px 0 3px; }
.leaf span { white-space: nowrap; }
.vscroll { width: 16px; flex: none; display: flex; flex-direction: column; background: #8e8e8e; }
.btn { display: flex; width: 16px; height: 16px; flex: none; align-items: center; justify-content: center; background: linear-gradient(#eee, #c2c2c2); border-bottom: 1px solid #777; }
.btn svg { width: 10px; height: 10px; }
.vtrack { flex: 1; padding-top: 18px; }
.back .vtrack { padding-top: 21px; }
.vthumb { display: block; width: 15px; height: 20px; border: 1px solid #d5d5d5; border-radius: 8px; background: repeating-linear-gradient(#777 0 1px, transparent 1px 2px) 4px 5px / 6px 9px no-repeat #b4b4b4; }
.hier { height: 22px; flex: none; padding: 5px 0 0 3px; }
.hier svg { width: 14px; height: 14px; }
.split { height: 5px; flex: none; background: #d0d0d6; }
.props { flex: 1; margin: 3px 4px 5px 3px; border: solid #111; border-width: 2px 0 0 2px; background: #fff; display: flex; flex-direction: column; border-right: 1px solid #fff; }
.propspace { flex: 1; }
.hscroll { height: 16px; display: flex; }
.htrack { flex: 1; background: #8e8e8e; }
.hthumb { display: block; width: 122px; height: 15px; border: 1px solid #8a8a8a; border-radius: 8px; background: repeating-linear-gradient(90deg, #777 0 1px, transparent 1px 2px) center / 9px 6px no-repeat #b8b8b8; }
.gutter { width: 6px; flex: none; background: linear-gradient(90deg, #ededed 1px, #d0d0d6 1px 5px, #e4e4e8 5px); }
.canvas { background: #000; }
.back .canvas { border-top: 2px solid #f0f0f0; box-sizing: content-box; }
.front .canvas { border-top: 2px solid #d00000; box-sizing: content-box; }
.labels { font-family: Inter, "DejaVu Sans", sans-serif; font-weight: 300; font-size: 15px; font-feature-settings: "zero", "cv11"; fill: #f00; }
.green { fill: #00d068; }

.mousebar { height: 19px; flex: none; display: flex; align-items: center; background: linear-gradient(#ececec, #b4b4b4); border-bottom: 1px solid #8c8c8c; position: relative; padding: 0 7px 1px 4px; border-radius: 0 0 4px 4px; }
.minigrip { width: 5px; height: 7px; background: repeating-linear-gradient(90deg, #888 0 1px, transparent 1px 2px); margin-right: 2px; }
.mousebar .mid { position: absolute; left: 0; right: 0; text-align: center; padding-left: 3px; }
.mousebar .right { margin-left: auto; }
.statusbar { height: 22px; flex: none; display: flex; align-items: stretch; background: #efefef; line-height: 19px; padding-top: 1px; border-top: 1px solid #fff; }
.back .statusbar { height: 23px; border-bottom: 1px solid #777; }
.coord { width: 44px; padding-left: 3px; border-right: 1px solid #444; }
.front .coord { width: 51px; background: #f8d5d5; }
.prompt { flex: 1; padding-left: 10px; }
.cmd { border-left: 1px solid #444; width: 118px; padding-left: 8px; display: flex; gap: 9px; }
.temp { border-left: 1px solid #444; width: 61px; padding-left: 7px; display: flex; gap: 10px; }
.block { width: 8px; margin: 0 3px 2px 0; background: #9c9ca4; border-right: 1px solid #555; border-bottom: 1px solid #555; }

.taskbar { height: 25px; flex: none; display: flex; align-items: center; border-top: 1px solid #666; background: #d4d4d4; padding-left: 4px; font: 13px/16px "DejaVu Sans", sans-serif; color: #333; }
.homeicon { width: 16px; height: 16px; margin-right: 6px; }
.taskgrip { width: 4px; height: 8px; margin-right: 6px; }
.task { width: 143.1px; height: 24px; flex: none; display: flex; align-items: center; padding-left: 6px; gap: 8px; white-space: nowrap; letter-spacing: -.08px; }
.ticon { width: 16px; height: 16px; position: relative; flex: none; }
.ticon b { position: absolute; left: 0; right: 0; top: 0; text-align: center; letter-spacing: 0; color: #000; font: bold 13px/15px "Noto Sans", sans-serif; }
.ticon b.cgrey { color: #666; }
.ticon b.ade { font: 5px/5px "Noto Sans", sans-serif; white-space: pre; color: #777; }
.task svg { width: 16px; height: 16px; }
.task.active { background: linear-gradient(#74905a, #61794c); border: 1px solid #566d42; padding-left: 7px; }
.pager { display: flex; margin-left: 2px; width: 180px; height: 21px; background: #939393; border: 1px solid #eee; }
.cell { width: 45px; border-right: 1px solid #ddd; }
.on { background: #e1efd0; display: flex; align-items: center; justify-content: space-between; border: 1px solid #fff; }
.on i { width: 7px; height: 17px; background: #a9cd84; }
.on svg { width: 16px; height: 16px; }
</style>
